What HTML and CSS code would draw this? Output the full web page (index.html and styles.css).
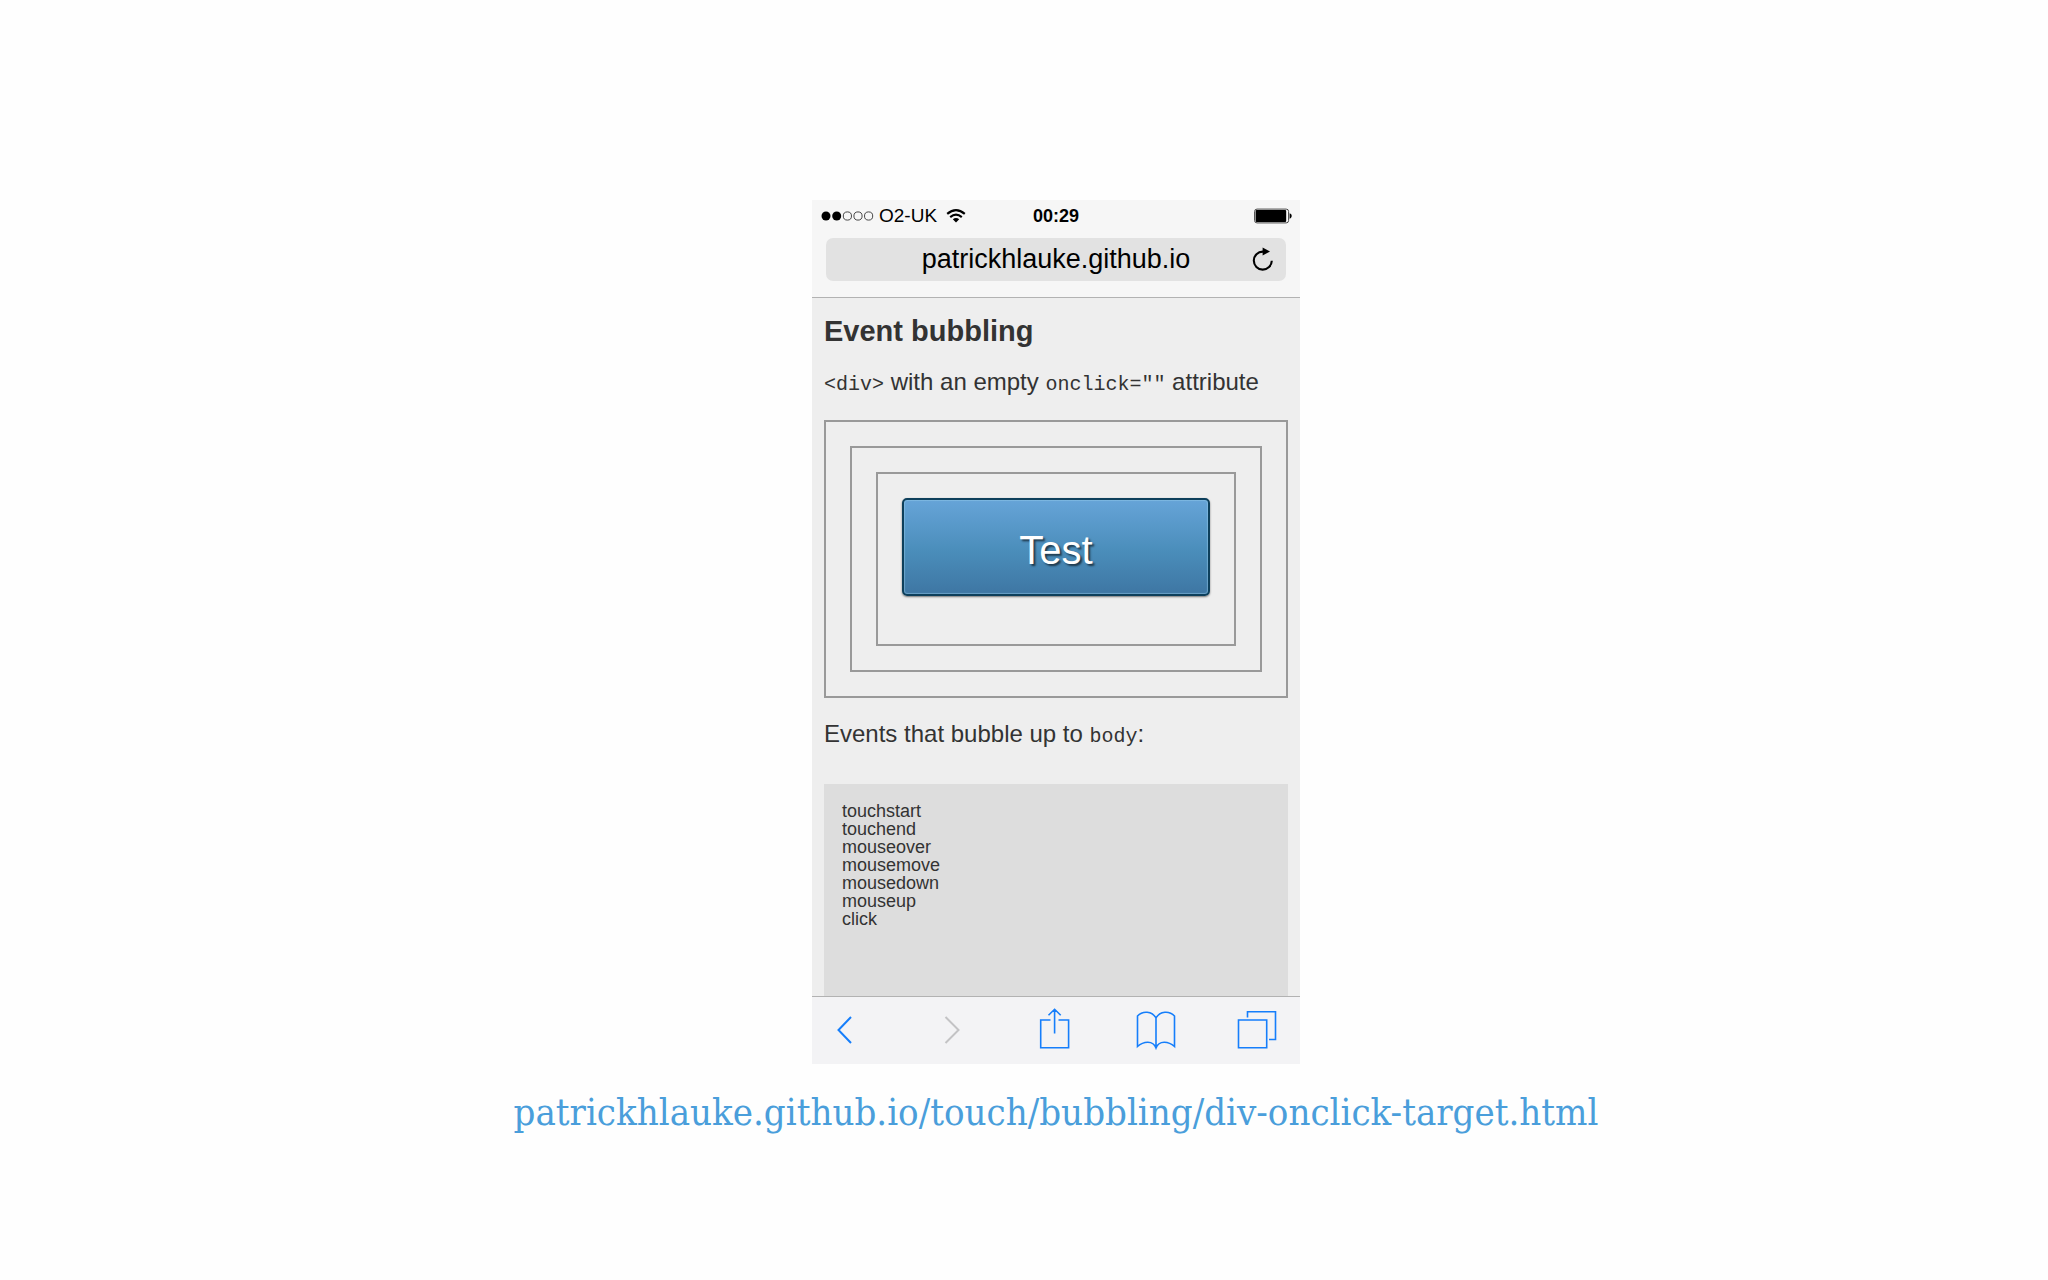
FILE: index.html
```html
<!DOCTYPE html>
<html lang="en">
<head>
    <meta charset="UTF-8">
    <meta name="viewport" content="width=device-width, initial-scale=1.0">
    <title>Event bubbling</title>
    <link rel="stylesheet" href="styles.css">
</head>
<body>
    <main class="slide">
        <div class="phone">
            <header class="chrome">
                <div class="status">
                    <div class="carrier">
                        <svg width="52" height="14" viewBox="0 0 52 14" aria-hidden="true">
                            <circle cx="5" cy="7" r="4.5"/>
                            <circle cx="15.7" cy="7" r="4.5"/>
                            <g fill="none" stroke="#333" stroke-width="0.9">
                                <circle cx="26.4" cy="7" r="4.1"/>
                                <circle cx="37" cy="7" r="4.1"/>
                                <circle cx="47.6" cy="7" r="4.1"/>
                            </g>
                        </svg>
                        <span>O2-UK</span>
                        <svg class="wifi" width="20" height="16" viewBox="0 0 20 16" aria-hidden="true">
                            <g fill="none" stroke="#000" stroke-width="2.1">
                                <path d="M1.2 5.9Q10 -1.8 18.8 5.9"/>
                                <path d="M4.2 9.1Q10 4.2 15.8 9.1"/>
                            </g>
                            <path d="M6.8 11.2Q10 8.6 13.2 11.2L10 14.4Z"/>
                        </svg>
                    </div>
                    <time class="time">00:29</time>
                    <svg class="battery" width="38" height="16" viewBox="0 0 38 16" aria-hidden="true">
                        <rect x="0.6" y="1.1" width="34" height="13.8" rx="2.4" fill="#fff" stroke="#444" stroke-width="1"/>
                        <rect x="1.6" y="2.1" width="30.6" height="11.8" rx="1"/>
                        <path d="M35.6 5.3C38.4 6 38.4 10 35.6 10.7Z"/>
                    </svg>
                </div>
                <div class="address">
                    <span>patrickhlauke.github.io</span>
                    <button class="reload" type="button" aria-label="Reload">
                        <svg width="24" height="24" viewBox="0 0 24 24" aria-hidden="true">
                            <path d="M13 3.6H10.8A9 9 0 1 0 19.8 12.8" fill="none" stroke="#000" stroke-width="2.1"/>
                            <path d="M10.6 -0.4L18 3.6L10.6 7.6Z"/>
                        </svg>
                    </button>
                </div>
            </header>
            <section class="page">
                <h1>Event bubbling</h1>
                <p class="intro"><code>&lt;div&gt;</code> with an empty <code>onclick=""</code> attribute</p>
                <div class="box">
                    <div class="box">
                        <div class="box inner">
                            <button class="test" type="button">Test</button>
                        </div>
                    </div>
                </div>
                <p class="label">Events that bubble up to <code>body</code>:</p>
                <ul class="log">
                    <li>touchstart</li>
                    <li>touchend</li>
                    <li>mouseover</li>
                    <li>mousemove</li>
                    <li>mousedown</li>
                    <li>mouseup</li>
                    <li>click</li>
                </ul>
            </section>
            <nav class="toolbar">
                <button type="button" aria-label="Back">
                    <svg width="40" height="44" viewBox="0 0 40 44"><path d="M26 9L13.5 22L26 35" stroke-width="2"/></svg>
                </button>
                <button type="button" aria-label="Forward" disabled>
                    <svg width="40" height="44" viewBox="0 0 40 44"><path d="M17.5 9L30.5 22L17.5 35" stroke-width="2"/></svg>
                </button>
                <button type="button" aria-label="Share">
                    <svg width="40" height="44" viewBox="0 0 40 44"><path d="M19.5 12H9.7V39.8H37.6V12H27.5M23.6 25.5V1.5M17.5 7.3L23.6 1.3L29.7 7.3"/></svg>
                </button>
                <button type="button" aria-label="Bookmarks">
                    <svg width="40" height="44" viewBox="0 0 40 44"><path d="M22 10C18 2.8 8.5 2.5 3.5 8V38.5C9.5 33 19 32 22 40C25 32 34.5 33 40.5 38.5V8C35.5 2.5 26 2.8 22 10ZM22 10V40"/></svg>
                </button>
                <button type="button" aria-label="Tabs">
                    <svg width="40" height="44" viewBox="0 0 40 44"><path d="M1.5 12H29.7V39.8H1.5ZM10.5 9.5V3.7H38.5V31.5H32"/></svg>
                </button>
            </nav>
        </div>
        <a class="link" href="https://patrickhlauke.github.io/touch/bubbling/div-onclick-target.html">patrickhlauke.github.io/touch/bubbling/div-onclick-target.html</a>
    </main>
</body>
</html>
```

FILE: styles.css
```css
body {
    margin: 0;
    background: #fefefe;
    font-family: "Liberation Sans", Arial, sans-serif;
}
button {
    padding: 0;
    border: none;
    background: none;
    cursor: pointer;
}
svg {
    display: block;
    overflow: visible;
}
.slide {
    display: flex;
    flex-direction: column;
    align-items: center;
    padding: 200px 0 0 64px;
}
.phone {
    width: 100%;
    max-width: 488px;
    background: #eee;
}
.chrome {
    padding: 4px 8px 16px;
    background: #f6f6f6;
    border-bottom: 1px solid #b2b2b2;
}
.status {
    display: grid;
    grid-template-columns: 1fr auto 1fr;
    align-items: center;
    height: 24px;
    font-size: 19px;
    line-height: 24px;
}
.carrier {
    display: flex;
    align-items: center;
    gap: 6px;
    padding-left: 1px;
}
.wifi {
    margin-left: 3px;
}
.time {
    font-size: 18px;
    font-weight: bold;
}
.battery {
    justify-self: end;
}
.address {
    display: grid;
    grid-template-columns: 24px 1fr 24px;
    align-items: center;
    margin: 10px 6px 0;
    padding: 0 10px;
    height: 43px;
    border-radius: 7px;
    background: #e2e2e2;
    font-size: 27px;
}
.address span {
    grid-column: 2;
    text-align: center;
}
.page {
    padding: 16px 12px 0;
    color: #333;
}
h1 {
    margin: 0 0 20px;
    font-size: 29px;
    line-height: 34px;
}
p {
    font-size: 24px;
    line-height: 28px;
}
code {
    font-family: "Liberation Mono", "Courier New", monospace;
    font-size: 20px;
    line-height: 20px;
}
.intro {
    margin: 0 0 24px;
}
.box {
    padding: 24px;
    border: 2px solid #999;
}
.inner {
    padding-bottom: 48px;
}
.test {
    display: block;
    width: 100%;
    height: 98px;
    padding-top: 6px;
    border: 2px solid #0d3f5b;
    border-radius: 5px;
    background: linear-gradient(#66a4d8, #4a8dba 55%, #3e76a3);
    box-shadow: inset 0 0 1px 1px rgba(150, 205, 235, 0.5), 0 1px 2px rgba(0, 0, 0, 0.5);
    color: #fff;
    font-family: inherit;
    font-size: 40px;
    line-height: 48px;
    text-shadow: 2px 2px 2px rgba(0, 0, 0, 0.6);
}
.label {
    margin: 22px 0 36px;
}
.log {
    min-height: 176px;
    margin: 0;
    padding: 18px;
    background: #ddd;
    font-size: 18px;
    line-height: 18px;
    list-style: none;
}
.toolbar {
    display: flex;
    justify-content: space-between;
    padding: 11px 23px 12px 13px;
    border-top: 1px solid #b2b2b2;
    background: #f3f3f5;
}
.toolbar svg {
    fill: none;
    stroke: #157efb;
    stroke-width: 1.6;
}
.toolbar button:disabled svg {
    stroke: #c3c3c5;
}
.link {
    margin-top: 24px;
    color: #4a9edb;
    font-family: "Roboto Slab", "DejaVu Serif Condensed", "DejaVu Serif", serif;
    font-size: 38px;
    line-height: 48px;
    text-decoration: none;
}
```
